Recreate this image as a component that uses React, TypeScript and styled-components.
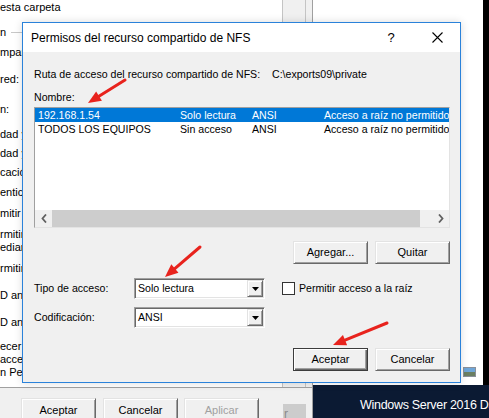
import React from 'react';
import styled, { createGlobalStyle, css } from 'styled-components';

const GlobalStyle = createGlobalStyle`
  html, body { margin: 0; padding: 0; background: #fff; }
  body { font-family: "Liberation Sans", Arial, sans-serif; }
`;

const raised = css`
  background: #f0f0f0;
  border: 1px solid;
  border-color: #e3e3e3 #696969 #696969 #e3e3e3;
  box-shadow: inset 1px 1px 0 #fff, inset -1px -1px 0 #a0a0a0;
`;

const sunken = css`
  border: 1px solid;
  border-color: #a0a0a0 #fff #fff #a0a0a0;
  box-shadow: inset 1px 1px 0 #696969, inset -1px -1px 0 #e3e3e3;
`;

const Screen = styled.div`
  position: relative;
  width: 489px;
  height: 418px;
  overflow: hidden;
  display: flex;
  font-family: "Liberation Sans", Arial, sans-serif;
  font-size: 10.6px;
  color: #000;
`;

/* ---- back property window ---- */
const BackWindow = styled.div`
  width: 312px;
  flex-shrink: 0;
  display: flex;
  flex-direction: column;
  border-right: 1px solid #a0a0a0;
`;
const BackContent = styled.div`
  flex: 1;
  display: flex;
  background: #fff;
`;
const BackText = styled.div`
  width: 282px;
  overflow: hidden;
  white-space: nowrap;
  font-size: 11px;
  line-height: 13px;
`;
const BackLine = styled.div<{ $gap: number }>`
  margin-top: ${p => p.$gap}px;
`;
const GroupCaption = styled.div<{ $gap: number }>`
  margin-top: ${p => p.$gap}px;
  display: flex;
  align-items: center;
  gap: 5px;
  &::after {
    content: '';
    flex: 1;
    border-top: 1px solid #c8c8c8;
  }
`;
const SideStrip = styled.div`
  width: 22px;
  background: #f0f0f0;
  border-left: 1px solid #c4c4c4;
  border-right: 1px solid #c4c4c4;
`;
const SideFill = styled.div`
  flex: 1;
  background: #f0f0f0;
`;
const BackFooter = styled.div`
  height: 31px;
  background: #f0f0f0;
  border-top: 1px solid #a0a0a0;
  display: flex;
  padding: 10px 0 0 21px;
  gap: 7px;
  box-sizing: border-box;
  font-size: 11px;
`;
const FooterButton = styled.div<{ $disabled?: boolean; $gapLeft?: number }>`
  ${raised};
  width: 75px;
  height: 23px;
  box-sizing: border-box;
  display: flex;
  align-items: center;
  justify-content: center;
  margin-left: ${p => p.$gapLeft ?? 0}px;
  color: ${p => (p.$disabled ? '#a0a0a0' : '#000')};
`;
const StubButton = styled.div`
  width: 23px;
  height: 20px;
  margin: 6px 0 0 17px;
  background: #cccccc;
  color: #8a8a8a;
  font-size: 12px;
  line-height: 20px;
  padding-left: 1px;
  box-sizing: border-box;
`;

/* ---- right side / desktop ---- */
const RightColumn = styled.div`
  flex: 1;
  min-width: 0;
  display: flex;
  flex-direction: column;
`;
const RightTop = styled.div`
  height: 385px;
  display: flex;
`;
const WhitePane = styled.div`
  flex: 1;
  background: #fff;
  display: flex;
  flex-direction: column;
  justify-content: flex-end;
  padding: 0 0 8px 150px;
`;
const BlackStrip = styled.div`
  width: 6px;
  background: #000;
`;
const Desktop = styled.div`
  flex: 1;
  background: #0b1a33;
  color: #fff;
  font-size: 12.5px;
  letter-spacing: -0.3px;
  line-height: 16px;
  padding: 12px 0 0 47px;
  white-space: nowrap;
  overflow: hidden;
`;

/* ---- dialog ---- */
const Dialog = styled.div`
  position: absolute;
  left: 22px;
  top: 22px;
  width: 439px;
  height: 361px;
  box-sizing: border-box;
  border: 1px solid #2a82da;
  display: flex;
  flex-direction: column;
  box-shadow: 0 0 8px rgba(0, 0, 0, 0.15);
`;
const TitleBar = styled.div`
  height: 29px;
  background: #fff;
  display: flex;
  align-items: center;
  padding-left: 8px;
  font-size: 12px;
`;
const TitleText = styled.div`
  flex: 1;
`;
const CaptionButton = styled.div`
  width: 46px;
  height: 29px;
  display: flex;
  align-items: center;
  justify-content: center;
  font-size: 13px;
`;
const Body = styled.div`
  flex: 1;
  background: #f0f0f0;
  padding: 16px 10px 0 11px;
  display: flex;
  flex-direction: column;
  line-height: 13px;
`;
const PathRow = styled.div`
  display: flex;
`;
const PathLabel = styled.div`
  width: 238px;
`;
const Caption = styled.div<{ $gap: number }>`
  margin-top: ${p => p.$gap}px;
`;
const ListBox = styled.div`
  margin-top: 3px;
  width: 416px;
  height: 121px;
  box-sizing: border-box;
  border: 1px solid;
  border-color: #a0a0a0 #e3e3e3 #e3e3e3 #a0a0a0;
  background: #fff;
  display: flex;
  flex-direction: column;
`;
const ListRow = styled.div<{ $selected?: boolean }>`
  display: flex;
  height: 14px;
  line-height: 14px;
  white-space: nowrap;
  background: ${p => (p.$selected ? '#0078d7' : 'transparent')};
  color: ${p => (p.$selected ? '#fff' : '#000')};
`;
const Cell = styled.div<{ $width?: number }>`
  ${p => (p.$width ? `width: ${p.$width}px;` : 'flex: 1;')}
  padding-left: 3px;
  box-sizing: border-box;
  overflow: hidden;
`;
const ListSpacer = styled.div`
  flex: 1;
`;
const HScroll = styled.div`
  height: 17px;
  display: flex;
  background: #f0f0f0;
`;
const ScrollArrow = styled.div`
  width: 17px;
  display: flex;
  align-items: center;
  justify-content: center;
`;
const Thumb = styled.div`
  width: 368px;
  background: #cdcdcd;
`;
const Track = styled.div`
  flex: 1;
`;
const ButtonRow = styled.div<{ $gap: number }>`
  margin-top: ${p => p.$gap}px;
  display: flex;
  justify-content: flex-end;
  gap: 7px;
`;
const Button = styled.div<{ $default?: boolean }>`
  ${raised};
  width: 75px;
  height: 23px;
  box-sizing: border-box;
  display: flex;
  align-items: center;
  justify-content: center;
  font-size: 11px;
  ${p =>
    p.$default &&
    css`
      border-color: #3c3c3c;
      box-shadow: inset 1px 1px 0 #fff, inset -1px -1px 0 #696969, inset -2px -2px 0 #a0a0a0;
    `}
`;
const FieldRow = styled.div<{ $gap: number }>`
  margin-top: ${p => p.$gap}px;
  display: flex;
  align-items: center;
  height: 21px;
`;
const FieldLabel = styled.div`
  width: 100px;
`;
const Combo = styled.div`
  ${sunken};
  width: 131px;
  height: 21px;
  box-sizing: border-box;
  background: #fff;
  display: flex;
  align-items: center;
  padding: 0 1px 0 3px;
  font-size: 10.6px;
`;
const ComboValue = styled.div`
  flex: 1;
`;
const ComboButton = styled.div`
  ${raised};
  width: 16px;
  height: 17px;
  box-sizing: border-box;
  display: flex;
  align-items: center;
  justify-content: center;
`;
const Check = styled.div`
  width: 13px;
  height: 13px;
  box-sizing: border-box;
  border: 1px solid #333;
  background: #fff;
  margin: 0 4px 0 17px;
`;
const CheckLabel = styled.div`
  font-size: 10.6px;
`;

/* ---- overlays ---- */
const Overlay = styled.svg`
  position: absolute;
  left: 0;
  top: 0;
  pointer-events: none;
`;
const PictureIcon = styled.svg`
  display: block;
`;

const backLines: { text: string; gap: number }[] = [
  { text: 'mpar', gap: 7 },
  { text: ' red:', gap: 14 },
  { text: 'n:', gap: 17 },
  { text: 'dad y', gap: 12 },
  { text: 'dad y', gap: 6 },
  { text: 'cació', gap: 6 },
  { text: 'entica', gap: 7 },
  { text: 'mitir e', gap: 8 },
  { text: 'rmitir\nediar', gap: 8 },
  { text: 'rmitir', gap: 8 },
  { text: 'D an', gap: 14 },
  { text: 'D an', gap: 14 },
  { text: 'ecer\nacce\nn Per', gap: 11 },
];

const rows = [
  { name: '192.168.1.54', access: 'Solo lectura', enc: 'ANSI', root: 'Acceso a raíz no permitido', selected: true },
  { name: 'TODOS LOS EQUIPOS', access: 'Sin acceso', enc: 'ANSI', root: 'Acceso a raíz no permitido', selected: false },
];

const arrows: [number, number, number, number][] = [
  [125, 80, 88, 103],
  [200, 247, 165, 277],
  [387, 323, 333, 345],
];

function Arrow({ x1, y1, x2, y2 }: { x1: number; y1: number; x2: number; y2: number }) {
  const dx = x2 - x1;
  const dy = y2 - y1;
  const len = Math.hypot(dx, dy);
  const ux = dx / len;
  const uy = dy / len;
  const head = 13;
  const half = 5.5;
  const bx = x2 - ux * head;
  const by = y2 - uy * head;
  const pts = `${x2},${y2} ${bx - uy * half},${by + ux * half} ${bx + uy * half},${by - ux * half}`;
  return (
    <g>
      <line x1={x1} y1={y1} x2={bx + ux * 2} y2={by + uy * 2} stroke="#e8231d" strokeWidth={3} strokeLinecap="round" />
      <polygon points={pts} fill="#e8231d" />
    </g>
  );
}

function Chevron({ left }: { left?: boolean }) {
  return (
    <svg width="6" height="9" viewBox="0 0 6 9">
      <polyline
        points={left ? '5,0.5 1.5,4.5 5,8.5' : '1,0.5 4.5,4.5 1,8.5'}
        fill="none"
        stroke="#606060"
        strokeWidth="1.8"
      />
    </svg>
  );
}

function DropArrow() {
  return (
    <svg width="7" height="4" viewBox="0 0 7 4">
      <polygon points="0,0 7,0 3.5,4" fill="#000" />
    </svg>
  );
}

export default function App() {
  return (
    <Screen>
      <GlobalStyle />
      <BackWindow>
        <BackContent>
          <BackText>
            <BackLine $gap={1}>esta carpeta</BackLine>
            <GroupCaption $gap={12}>n</GroupCaption>
            {backLines.map((l, i) =>
              l.text.split('\n').map((t, j) => (
                <BackLine key={`${i}-${j}`} $gap={j === 0 ? l.gap : 0}>
                  {t}
                </BackLine>
              ))
            )}
          </BackText>
          <SideStrip />
          <SideFill />
        </BackContent>
        <BackFooter>
          <FooterButton>Aceptar</FooterButton>
          <FooterButton>Cancelar</FooterButton>
          <FooterButton $disabled $gapLeft={-1}>Aplicar</FooterButton>
          <StubButton>r</StubButton>
        </BackFooter>
      </BackWindow>

      <RightColumn>
        <RightTop>
          <WhitePane>
            <PictureIcon width="13" height="10" viewBox="0 0 13 10">
              <rect x="0.5" y="0.5" width="12" height="9" fill="#dfe6ee" stroke="#8a9099" />
              <rect x="1" y="1" width="11" height="4" fill="#6fa6d8" />
              <rect x="1" y="5" width="11" height="4" fill="#6b7f62" />
            </PictureIcon>
          </WhitePane>
          <BlackStrip />
        </RightTop>
        <Desktop>Windows Server 2016 Datacenter</Desktop>
      </RightColumn>

      <Dialog>
        <TitleBar>
          <TitleText>Permisos del recurso compartido de NFS</TitleText>
          <CaptionButton>?</CaptionButton>
          <CaptionButton>
            <svg width="11" height="11" viewBox="0 0 11 11">
              <path d="M0.5 0.5 L10.5 10.5 M10.5 0.5 L0.5 10.5" stroke="#000" strokeWidth="1.1" />
            </svg>
          </CaptionButton>
        </TitleBar>
        <Body>
          <PathRow>
            <PathLabel>Ruta de acceso del recurso compartido de NFS:</PathLabel>
            <div>C:\exports09\private</div>
          </PathRow>
          <Caption $gap={10}>Nombre:</Caption>
          <ListBox>
            {rows.map(r => (
              <ListRow key={r.name} $selected={r.selected}>
                <Cell $width={142}>{r.name}</Cell>
                <Cell $width={72}>{r.access}</Cell>
                <Cell $width={72}>{r.enc}</Cell>
                <Cell>{r.root}</Cell>
              </ListRow>
            ))}
            <ListSpacer />
            <HScroll>
              <ScrollArrow>
                <Chevron left />
              </ScrollArrow>
              <Thumb />
              <Track />
              <ScrollArrow>
                <Chevron />
              </ScrollArrow>
            </HScroll>
          </ListBox>
          <ButtonRow $gap={13}>
            <Button>Agregar...</Button>
            <Button>Quitar</Button>
          </ButtonRow>
          <FieldRow $gap={14}>
            <FieldLabel>Tipo de acceso:</FieldLabel>
            <Combo>
              <ComboValue>Solo lectura</ComboValue>
              <ComboButton>
                <DropArrow />
              </ComboButton>
            </Combo>
            <Check />
            <CheckLabel>Permitir acceso a la raíz</CheckLabel>
          </FieldRow>
          <FieldRow $gap={8}>
            <FieldLabel>Codificación:</FieldLabel>
            <Combo>
              <ComboValue>ANSI</ComboValue>
              <ComboButton>
                <DropArrow />
              </ComboButton>
            </Combo>
          </FieldRow>
          <ButtonRow $gap={20}>
            <Button $default>Aceptar</Button>
            <Button>Cancelar</Button>
          </ButtonRow>
        </Body>
      </Dialog>

      <Overlay width="489" height="418" viewBox="0 0 489 418">
        {arrows.map(([a, b, c, d], i) => (
          <Arrow key={i} x1={a} y1={b} x2={c} y2={d} />
        ))}
      </Overlay>
    </Screen>
  );
}
